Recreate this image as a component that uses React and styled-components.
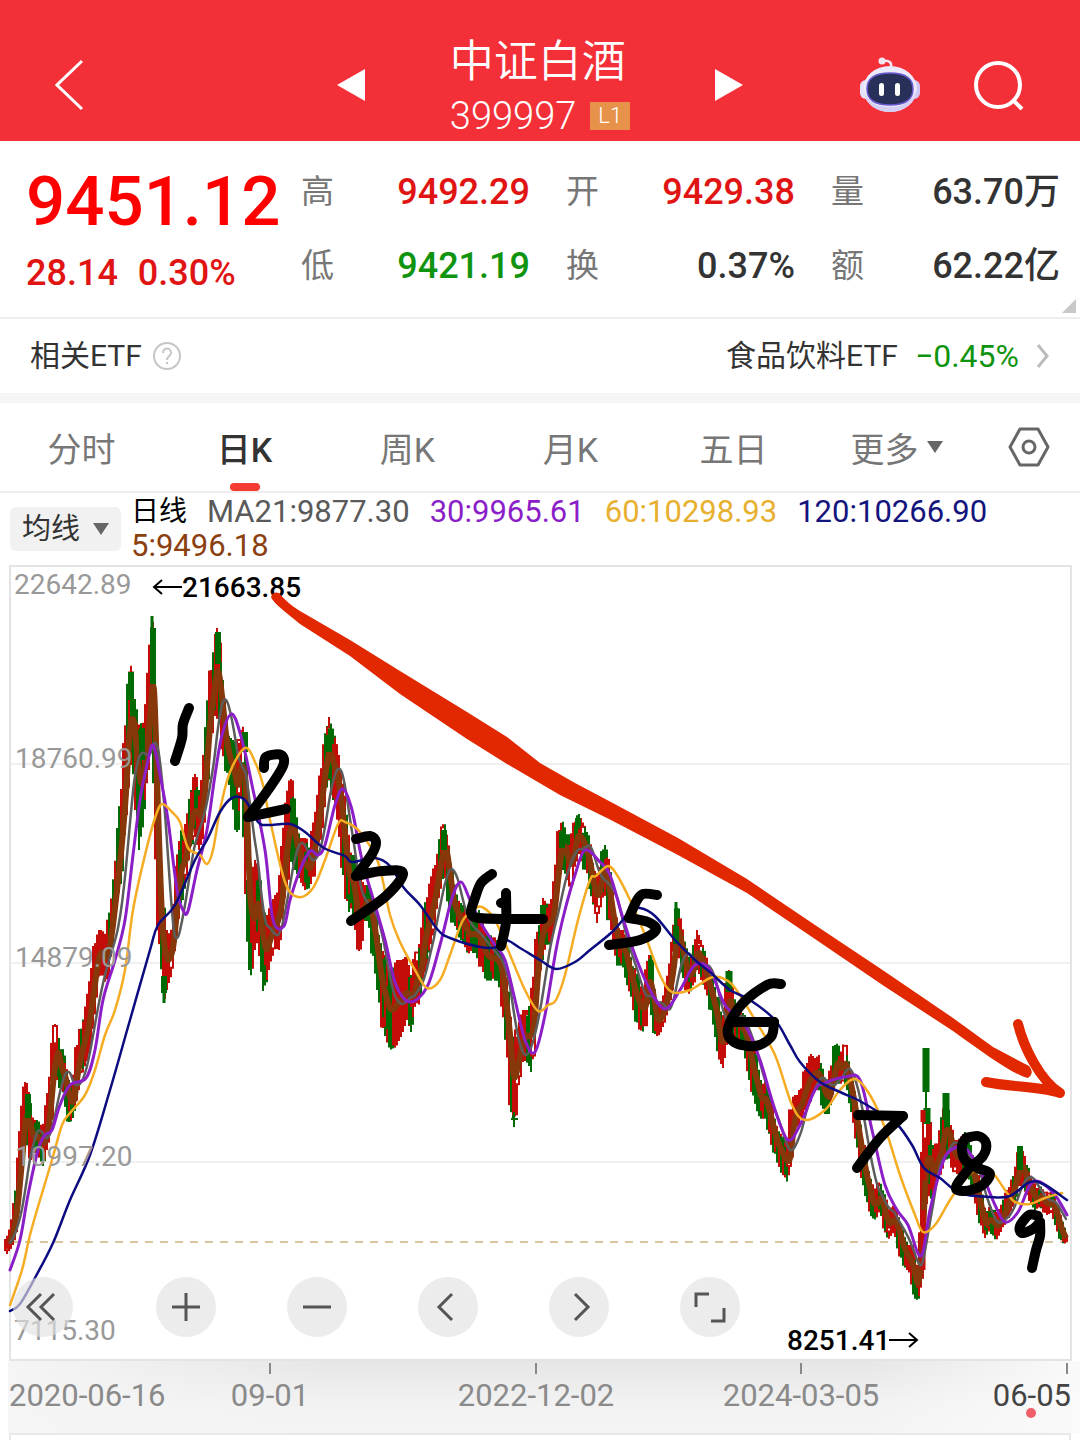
import React, { useState } from "react";
import styled, { createGlobalStyle } from "styled-components";

const stats = [
  { label: "高", value: "9492.29", color: "#e11414" },
  { label: "开", value: "9429.38", color: "#e11414" },
  { label: "量", value: "63.70万", color: "#333333" },
  { label: "低", value: "9421.19", color: "#109410" },
  { label: "换", value: "0.37%", color: "#333333" },
  { label: "额", value: "62.22亿", color: "#333333" }
];

const tabs = ["分时", "日K", "周K", "月K", "五日"];

const averages = [
  { text: "MA21:9877.30", color: "#5a5a5a" },
  { text: "30:9965.61", color: "#8c1ec8" },
  { text: "60:10298.93", color: "#e8b030" },
  { text: "120:10266.90", color: "#14147d" },
  { text: "5:9496.18", color: "#8b4010" }
];

// [x, high, low] of the price, in chart units
const price = [
  [7, 1240, 1254], [12, 1222, 1246], [17, 1180, 1222], [21, 1120, 1190], [24, 1090, 1155],
  [26, 1074, 1135], [28, 1092, 1150], [31, 1115, 1160], [35, 1120, 1152], [38, 1120, 1155],
  [43, 1128, 1166], [46, 1110, 1155], [49, 1088, 1140], [52, 1052, 1110], [55, 1024, 1070],
  [58, 1032, 1085], [61, 1050, 1090], [65, 1063, 1095], [69, 1080, 1122], [73, 1088, 1118],
  [76, 1050, 1102], [78, 1040, 1082], [82, 1026, 1070], [86, 1000, 1065], [90, 975, 1050],
  [94, 948, 1010], [98, 930, 978], [102, 930, 972], [106, 935, 985], [110, 912, 960],
  [114, 880, 930], [118, 840, 892], [121, 805, 872], [124, 760, 850], [127, 695, 800],
  [130, 661, 765], [133, 675, 765], [136, 720, 800], [139, 730, 850], [142, 727, 830],
  [146, 715, 790], [149, 650, 770], [152, 616, 740], [154, 628, 780], [156, 710, 880],
  [158, 800, 920], [160, 870, 960], [162, 895, 975], [164, 910, 1003], [167, 930, 990],
  [170, 935, 975], [173, 920, 960], [176, 880, 925], [180, 828, 905], [183, 835, 900],
  [187, 820, 870], [191, 790, 845], [195, 774, 835], [199, 800, 850], [203, 765, 830],
  [206, 730, 795], [209, 680, 755], [213, 660, 720], [217, 628, 700], [220, 650, 730],
  [224, 700, 765], [228, 735, 775], [233, 740, 800], [237, 750, 832], [241, 730, 790],
  [244, 725, 800], [246, 760, 900], [249, 850, 970], [252, 870, 978], [255, 860, 950],
  [258, 865, 940], [263, 910, 991], [267, 915, 980], [270, 905, 965], [275, 895, 948],
  [279, 890, 950], [283, 840, 910], [287, 800, 880], [291, 779, 860], [295, 815, 870],
  [300, 838, 880], [305, 838, 890], [310, 850, 888], [314, 820, 872], [318, 795, 850],
  [322, 760, 820], [325, 735, 795], [329, 717, 780], [333, 730, 800], [337, 745, 812],
  [341, 770, 845], [345, 810, 890], [349, 850, 912], [353, 855, 905], [356, 880, 942],
  [360, 880, 954], [364, 885, 920], [370, 885, 922], [374, 900, 965], [378, 930, 988],
  [381, 945, 1020], [386, 960, 1040], [390, 975, 1050], [396, 960, 1047], [402, 960, 1035],
  [407, 955, 1020], [411, 975, 1032], [415, 960, 1002], [420, 940, 1005], [424, 905, 970],
  [428, 895, 955], [432, 880, 938], [436, 860, 912], [440, 840, 885], [444, 819, 868],
  [448, 840, 895], [452, 880, 920], [458, 900, 932], [463, 905, 942], [468, 915, 955],
  [473, 920, 948], [479, 910, 960], [484, 930, 975], [489, 935, 980], [496, 940, 978],
  [500, 940, 988], [504, 970, 1018], [508, 1000, 1050], [511, 1030, 1105], [514, 1040, 1127],
  [518, 1025, 1085], [523, 1010, 1062], [527, 1010, 1060], [532, 1000, 1075], [536, 945, 1012],
  [540, 920, 962], [543, 898, 955], [548, 905, 942], [552, 900, 942], [556, 865, 910],
  [559, 830, 880], [562, 819, 870], [566, 830, 870], [570, 850, 892], [574, 825, 868],
  [578, 812, 850], [582, 820, 865], [587, 832, 872], [592, 865, 900], [597, 875, 923],
  [602, 855, 895], [605, 845, 885], [609, 870, 920], [612, 895, 935], [616, 915, 952],
  [619, 930, 965], [623, 930, 962], [627, 945, 980], [632, 965, 1000], [636, 970, 1020],
  [640, 985, 1030], [644, 990, 1032], [648, 955, 1005], [651, 955, 1002], [654, 1000, 1033],
  [658, 1005, 1037], [662, 1000, 1030], [667, 980, 1015], [671, 960, 1000], [674, 930, 975],
  [676, 902, 950], [680, 925, 958], [684, 940, 980], [688, 960, 995], [692, 955, 990],
  [697, 930, 968], [701, 940, 980], [706, 960, 992], [711, 975, 1010], [716, 990, 1035],
  [720, 1020, 1062], [723, 1030, 1068], [726, 990, 1040], [729, 970, 1020], [733, 1000, 1035],
  [740, 1010, 1042], [745, 1015, 1052], [750, 1030, 1080], [754, 1050, 1100], [758, 1065, 1115],
  [762, 1085, 1120], [766, 1080, 1115], [770, 1100, 1140], [774, 1115, 1150], [778, 1130, 1165],
  [782, 1135, 1170], [786, 1145, 1180], [788, 1150, 1183], [791, 1110, 1160], [795, 1095, 1128],
  [800, 1095, 1120], [805, 1070, 1110], [810, 1053, 1100], [815, 1058, 1090], [819, 1055, 1090],
  [824, 1075, 1110], [828, 1085, 1115], [832, 1060, 1100], [836, 1040, 1080], [840, 1055, 1085],
  [844, 1041, 1080], [848, 1060, 1092], [852, 1080, 1112], [856, 1100, 1140], [860, 1130, 1162],
  [864, 1150, 1185], [868, 1170, 1202], [872, 1190, 1218], [876, 1190, 1220], [880, 1180, 1208],
  [884, 1195, 1230], [888, 1210, 1240], [894, 1205, 1232], [898, 1215, 1245], [903, 1230, 1265],
  [907, 1245, 1270], [911, 1245, 1275], [915, 1260, 1295], [918, 1275, 1302], [921, 1220, 1285],
  [923, 1120, 1240], [928, 1110, 1195], [932, 1150, 1200], [936, 1145, 1182], [940, 1140, 1172],
  [943, 1110, 1160], [946, 1093, 1160], [950, 1120, 1158], [954, 1140, 1170], [958, 1140, 1175],
  [965, 1132, 1170], [970, 1145, 1182], [975, 1165, 1198], [980, 1190, 1222], [985, 1215, 1238],
  [990, 1205, 1230], [996, 1215, 1241], [1001, 1205, 1232], [1006, 1195, 1220], [1010, 1185, 1210],
  [1015, 1170, 1200], [1020, 1143, 1182], [1024, 1155, 1190], [1030, 1175, 1200], [1035, 1190, 1210],
  [1040, 1185, 1207], [1047, 1195, 1215], [1053, 1190, 1212], [1058, 1212, 1230], [1062, 1225, 1243],
  [1067, 1240, 1244]
];

const ma30 = [
  [10, 1270], [20, 1240], [28, 1195], [38, 1150], [45, 1135], [52, 1130], [60, 1105], [70, 1085],
  [86, 1078], [95, 1050], [103, 1000], [115, 960], [125, 920], [133, 855], [140, 800], [147, 765],
  [153, 745], [160, 775], [168, 820], [177, 890], [183, 910], [188, 911], [197, 870], [207, 830],
  [215, 775], [222, 735], [232, 714], [242, 740], [252, 785], [265, 850], [273, 920], [284, 926],
  [290, 900], [300, 870], [310, 851], [318, 855], [325, 845], [335, 805], [343, 789], [352, 810],
  [362, 860], [375, 905], [385, 940], [396, 985], [410, 1002], [427, 987], [440, 945], [452, 898],
  [461, 882], [470, 900], [482, 925], [495, 945], [505, 960], [515, 1000], [525, 1040], [535, 1052],
  [545, 1015], [556, 950], [565, 910], [575, 875], [585, 850], [600, 862], [610, 875], [622, 915],
  [635, 955], [650, 990], [665, 1009], [680, 990], [695, 965], [710, 970], [725, 1005], [745, 1025],
  [760, 1060], [775, 1110], [788, 1140], [800, 1125], [815, 1090], [825, 1083], [845, 1077],
  [860, 1080], [872, 1130], [885, 1185], [897, 1210], [908, 1225], [921, 1256], [930, 1210],
  [942, 1165], [951, 1150], [965, 1148], [980, 1170], [995, 1205], [1005, 1222], [1018, 1212],
  [1030, 1185], [1040, 1182], [1055, 1195], [1067, 1215]
];

const ma60 = [
  [10, 1305], [22, 1270], [30, 1235], [40, 1200], [52, 1160], [62, 1125], [70, 1113], [85, 1095],
  [95, 1070], [105, 1035], [115, 1010], [125, 970], [133, 910], [145, 855], [155, 818], [162, 804],
  [172, 812], [180, 822], [188, 848], [200, 855], [207, 864], [213, 850], [220, 810], [230, 772],
  [245, 748], [255, 762], [263, 785], [270, 820], [285, 882], [298, 897], [313, 888], [325, 860],
  [338, 824], [345, 822], [360, 832], [378, 862], [390, 915], [400, 942], [415, 970], [427, 988],
  [440, 980], [450, 955], [462, 922], [473, 910], [482, 907], [495, 920], [508, 950], [525, 990],
  [538, 1011], [548, 1005], [556, 1000], [565, 975], [578, 920], [590, 880], [596, 876], [608, 866],
  [617, 875], [630, 900], [645, 935], [660, 975], [672, 992], [690, 990], [710, 978], [722, 978],
  [735, 988], [755, 1020], [775, 1055], [792, 1105], [805, 1120], [825, 1110], [840, 1090],
  [855, 1079], [870, 1095], [885, 1128], [900, 1175], [915, 1215], [923, 1232], [935, 1225],
  [950, 1200], [963, 1182], [975, 1170], [990, 1170], [1005, 1190], [1015, 1202], [1030, 1204],
  [1045, 1198], [1062, 1193]
];

const ma120 = [
  [10, 1311], [20, 1304], [36, 1276], [53, 1243], [70, 1200], [90, 1155], [110, 1090], [130, 1020],
  [150, 950], [158, 925], [175, 905], [195, 860], [207, 840], [220, 812], [232, 798], [245, 800],
  [258, 822], [268, 825], [290, 824], [305, 832], [324, 848], [345, 856], [352, 862], [375, 858],
  [390, 866], [404, 888], [420, 905], [438, 930], [450, 938], [480, 947], [497, 947], [506, 940],
  [520, 948], [540, 960], [556, 969], [575, 962], [590, 950], [612, 932], [630, 912], [640, 908],
  [655, 916], [675, 940], [695, 960], [711, 973], [730, 990], [750, 1000], [775, 1020], [790, 1045],
  [800, 1062], [820, 1082], [840, 1092], [858, 1100], [880, 1113], [897, 1124], [912, 1145],
  [924, 1168], [940, 1178], [960, 1193], [990, 1197], [1010, 1196], [1030, 1182], [1045, 1185],
  [1067, 1200]
];

// handwritten wave numbers over the chart
const marks = [
  [[189, 708], [183, 724], [182, 738], [175, 761]],
  [[264, 768], [266, 757], [281, 755], [283, 766], [268, 790], [248, 817]],
  [[248, 817], [286, 809]],
  [[356, 839], [370, 836], [376, 842], [372, 854], [356, 876]],
  [[356, 876], [382, 871], [403, 873], [386, 896], [351, 921]],
  [[492, 874], [481, 883], [475, 898], [471, 913], [479, 918], [510, 919], [543, 919]],
  [[506, 893], [506, 922], [501, 946]],
  [[501, 903], [505, 902]],
  [[657, 895], [643, 894], [636, 902], [629, 918]],
  [[629, 918], [648, 922], [656, 930], [640, 940], [609, 945]],
  [[781, 984], [767, 985], [742, 1004], [728, 1028], [734, 1042], [755, 1046], [771, 1037], [774, 1022]],
  [[774, 1022], [733, 1022]],
  [[858, 1115], [903, 1116]],
  [[903, 1116], [880, 1138], [857, 1168]],
  [[966, 1138], [978, 1136], [986, 1143], [983, 1156], [968, 1170], [956, 1187], [964, 1191], [981, 1186], [990, 1174], [978, 1168], [965, 1160], [962, 1146], [966, 1138]],
  [[1038, 1216], [1029, 1215], [1020, 1226], [1022, 1233], [1033, 1229], [1040, 1222]],
  [[1040, 1222], [1040, 1236], [1036, 1250], [1032, 1268]]
];

const yLabels = [
  { text: "22642.89", x: 14, y: 594 },
  { text: "18760.99", x: 15, y: 768 },
  { text: "14879.09", x: 15, y: 967 },
  { text: "10997.20", x: 15, y: 1166 },
  { text: "7115.30", x: 14, y: 1340 }
];

const dates = [
  { text: "2020-06-16", x: 9, anchor: "start" },
  { text: "09-01", x: 270, anchor: "middle", tick: 270 },
  { text: "2022-12-02", x: 536, anchor: "middle", tick: 536 },
  { text: "2024-03-05", x: 801, anchor: "middle", tick: 801 },
  { text: "06-05", x: 1071, anchor: "end", tick: 1067, active: true }
];

const smooth = points => {
  let d = `M${points[0][0]} ${points[0][1]}`;
  for (let i = 0; i < points.length - 1; i++) {
    const p0 = points[i - 1] || points[i];
    const p1 = points[i];
    const p2 = points[i + 1];
    const p3 = points[i + 2] || p2;
    const c1 = [p1[0] + (p2[0] - p0[0]) / 6, p1[1] + (p2[1] - p0[1]) / 6];
    const c2 = [p2[0] - (p3[0] - p1[0]) / 6, p2[1] - (p3[1] - p1[1]) / 6];
    d += `C${c1.map(n => n.toFixed(1))} ${c2.map(n => n.toFixed(1))} ${p2}`;
  }
  return d;
};

const rangeAt = x => {
  let i = 0;
  while (i < price.length - 2 && price[i + 1][0] < x) i++;
  const [x0, h0, l0] = price[i];
  const [x1, h1, l1] = price[i + 1];
  const t = Math.max(0, (x - x0) / (x1 - x0));
  return { high: h0 + (h1 - h0) * t, low: l0 + (l1 - l0) * t, falling: h1 + l1 > h0 + l0 };
};

const buildCandles = () => {
  let seed = 7;
  const random = () => {
    seed = (seed * 16807) % 2147483647;
    return seed / 2147483647;
  };
  const candles = [];
  for (let x = 7; x < 1067; x += 2) {
    const { high, low, falling } = rangeAt(x);
    const size = low - high;
    const top = high + size * random() * 0.3;
    const bottom = low - size * random() * 0.3;
    const green = random() < (falling ? 0.6 : 0.15);
    const hollow = !green && random() < 0.3;
    candles.push({ x, high, low, top, bottom, green, hollow });
  }
  return candles;
};

const trailing = width => {
  const points = [];
  for (let x = 10; x <= 1067; x += 4) {
    let sum = 0;
    let count = 0;
    for (let k = Math.max(7, x - width); k <= x; k += 1) {
      const r = rangeAt(k);
      sum += (r.high + r.low) / 2;
      count++;
    }
    points.push([x, Math.round(sum / count)]);
  }
  return points;
};

const candles = buildCandles();
const ma5 = trailing(3);
const ma21 = trailing(17);

const Chart = () => (
  <ChartSvg viewBox="0 565 1080 868" role="img" aria-label="日K">
    <defs>
      <linearGradient id="axisShade" x1="0" y1="0" x2="0" y2="1">
        <stop offset="0" stopColor="#e6e6e6" />
        <stop offset="0.6" stopColor="#f2f2f2" />
        <stop offset="1" stopColor="#f4f4f4" />
      </linearGradient>
      <linearGradient id="axisFade" x1="0" y1="0" x2="1" y2="0">
        <stop offset="0" stopColor="#f5f5f5" />
        <stop offset="0.3" stopColor="#f5f5f5" stopOpacity="0" />
        <stop offset="0.8" stopColor="#fafafa" stopOpacity="0" />
        <stop offset="1" stopColor="#fafafa" />
      </linearGradient>
    </defs>
    <rect x="8" y="1361" width="1072" height="72" fill="url(#axisShade)" />
    <rect x="8" y="1361" width="1072" height="72" fill="url(#axisFade)" />
    <rect x="10" y="566" width="1061" height="794" fill="#ffffff" stroke="#e4e4e4" strokeWidth="2" />
    {[764, 963, 1162].map(y => (
      <line key={y} x1="10" x2="1070" y1={y} y2={y} stroke="#ebebeb" strokeWidth="1.5" />
    ))}
    <line x1="10" x2="1070" y1="1242" y2="1242" stroke="#d9c6a0" strokeWidth="2" strokeDasharray="8 7" />

    {candles.map(c => {
      const color = c.green ? "#006a05" : "#c40d08";
      return (
        <g key={c.x} stroke={color} strokeWidth="2" fill={c.hollow ? "#ffffff" : color}>
          <line x1={c.x} x2={c.x} y1={c.high} y2={c.low} />
          <rect x={c.x - 2} y={c.top} width="4" height={Math.max(2, c.bottom - c.top)} />
        </g>
      );
    })}
    <g fill="none" stroke="#86380a" strokeLinejoin="round">
      <path d={smooth(ma5)} strokeWidth="6" />
    </g>
    <g stroke="#006a05" fill="#006a05">
      <path strokeWidth="6" d="M131 672V700M153 628V684M142 728V760M218 632V664M28 1094V1118M164 976V993M444 830V850M676 926V944M562 832V848M578 818V826M1020 1146V1170M543 905V920M245 732V752M329 735V752" />
      <path strokeWidth="3" d="M152 616V628M164 993V1003M676 902V926" />
      <path strokeWidth="7" d="M926 1048V1092M927 1108V1124M946 1093V1120M729 971V992" />
      <path strokeWidth="2" d="M926 1092V1110M511 1119H518M514 1112V1127" />
    </g>
    <path d="M923 1110V1122M923 1165V1180M923 1210V1270" stroke="#c40d08" strokeWidth="5" />

    <g fill="none" strokeLinejoin="round" strokeLinecap="round">
      <path d={smooth(ma21)} stroke="#5c5c5c" strokeWidth="2.5" />
      <path d={smooth(ma30)} stroke="#8c1ec8" strokeWidth="3" />
      <path d={smooth(ma60)} stroke="#f5ac22" strokeWidth="2.5" />
      <path d={smooth(ma120)} stroke="#0c0c80" strokeWidth="2.5" />
    </g>

    {yLabels.map(l => (
      <AxisText key={l.text} x={l.x} y={l.y}>{l.text}</AxisText>
    ))}
    <PeakText x="182" y="597">21663.85</PeakText>
    <PeakText x="787" y="1350">8251.41</PeakText>
    <path
      d="M182 587H154M162 580L154 587L162 594M889 1340H917M909 1333L917 1340L909 1347"
      fill="none"
      stroke="#000000"
      strokeWidth="2"
    />

    <g fill="none" stroke="#000000" strokeWidth="10" strokeLinecap="round" strokeLinejoin="round">
      {marks.map((points, i) => (
        <path key={i} d={smooth(points)} />
      ))}
    </g>

    <path
      fill="#e12800"
      d="M279 593Q288 604 300 611L350 640L400 671L467 712L507 737L540 763L575 783L609 801L678 838L747 879L815 925L884 971L953 1018L993 1047L1029 1066Q1035 1073 1028 1078C1012 1074 985 1054 953 1031L884 986L815 939L747 893L678 855L609 819L560 795L507 764L467 739L400 694L350 656L300 624L284 611Q272 601 271 597Q273 591 279 593Z"
    />
    <path
      d="M1018 1024C1024 1048 1040 1080 1060 1093C1040 1086 1008 1087 986 1082"
      fill="none"
      stroke="#e12800"
      strokeWidth="10"
      strokeLinecap="round"
      strokeLinejoin="round"
    />

    {dates.map(d => (
      <React.Fragment key={d.text}>
        {d.tick && <line x1={d.tick} x2={d.tick} y1="1363" y2="1374" stroke="#888888" strokeWidth="2" />}
        <DateText x={d.x} y="1406" textAnchor={d.anchor} $active={d.active}>{d.text}</DateText>
      </React.Fragment>
    ))}
    <circle cx="1031" cy="1413" r="5" fill="#f0606a" />
  </ChartSvg>
);

const tools = [
  { name: "向前", path: "M28 17L15 30L28 43M41 17L28 30L41 43" },
  { name: "放大", path: "M30 16V44M16 30H44" },
  { name: "缩小", path: "M16 30H44" },
  { name: "左移", path: "M34 17L21 30L34 43" },
  { name: "右移", path: "M26 17L39 30L26 43" },
  { name: "全屏", path: "M16 30V17H29M44 31V44H31" }
];

const Robot = () => (
  <svg width="62" height="56" viewBox="0 0 62 56" aria-hidden="true">
    <path d="M24 4C31 3 33 6 32 11" fill="none" stroke="#f3e4f2" strokeWidth="2.5" />
    <circle cx="23" cy="4" r="3.5" fill="#f3e4f2" />
    <rect x="1" y="23" width="12" height="19" rx="6" fill="#e4e1f9" />
    <rect x="49" y="23" width="12" height="19" rx="6" fill="#cfc7f5" />
    <ellipse cx="31" cy="32" rx="27" ry="23" fill="#ece9fb" />
    <path d="M31 55C46 55 57 45 58 32C54 44 45 50 31 50C17 50 9 45 5 35C7 48 18 55 31 55Z" fill="#d5cff5" />
    <path
      d="M31 16C46 16 54 21 54 32C54 43 46 48 31 48C16 48 8 43 8 32C8 21 16 16 31 16Z"
      fill="#28305a"
      stroke="#6a5ad0"
      strokeWidth="1.5"
    />
    <rect x="20" y="26" width="5" height="13" rx="2.5" fill="#ffffff" />
    <rect x="36" y="26" width="5" height="13" rx="2.5" fill="#ffffff" />
  </svg>
);

const App = () => {
  const [active, setActive] = useState("日K");

  return (
    <Page>
      <GlobalStyle />
      <Header>
        <IconButton aria-label="返回">
          <svg width="30" height="52" viewBox="0 0 30 52" fill="none" stroke="#ffffff" strokeWidth="3">
            <path d="M27 2L2 26L27 50" />
          </svg>
        </IconButton>
        <Switcher>
          <IconButton aria-label="上一个">
            <svg width="28" height="32" viewBox="0 0 28 32" fill="#ffffff">
              <path d="M28 0V32L0 16Z" />
            </svg>
          </IconButton>
          <div>
            <Name>中证白酒</Name>
            <Code>
              399997 <Level>L1</Level>
            </Code>
          </div>
          <IconButton aria-label="下一个">
            <svg width="28" height="32" viewBox="0 0 28 32" fill="#ffffff">
              <path d="M0 0V32L28 16Z" />
            </svg>
          </IconButton>
        </Switcher>
        <Actions>
          <IconButton aria-label="助手">
            <Robot />
          </IconButton>
          <IconButton aria-label="搜索">
            <svg width="52" height="52" viewBox="0 0 52 52" fill="none" stroke="#ffffff" strokeWidth="4">
              <circle cx="25" cy="26" r="22" />
              <path d="M40 41L49 50" />
            </svg>
          </IconButton>
        </Actions>
      </Header>

      <Quote>
        <Latest>
          <Price>9451.12</Price>
          <Change>
            <span>28.14</span>
            <span>0.30%</span>
          </Change>
        </Latest>
        <Stats>
          {stats.map(s => (
            <Stat key={s.label}>
              <StatLabel>{s.label}</StatLabel>
              <StatValue $color={s.color}>{s.value}</StatValue>
            </Stat>
          ))}
        </Stats>
        <Corner />
      </Quote>

      <EtfRow>
        <EtfGroup>
          相关ETF
          <svg width="30" height="30" viewBox="0 0 30 30" fill="none" stroke="#c6c6c6" strokeWidth="2">
            <circle cx="15" cy="15" r="13" />
            <path d="M11 12C11 6 19 6 19 12C19 15 15 15 15 19M15 21V23" />
          </svg>
        </EtfGroup>
        <EtfLink href="#etf">
          食品饮料ETF
          <EtfChange>−0.45%</EtfChange>
          <svg width="14" height="26" viewBox="0 0 14 26" fill="none" stroke="#bcbcbc" strokeWidth="3">
            <path d="M2 2L11 13L2 24" />
          </svg>
        </EtfLink>
      </EtfRow>

      <Tabs>
        {tabs.map(t => (
          <Tab key={t} $active={t === active} onClick={() => setActive(t)}>
            {t}
          </Tab>
        ))}
        <Tab>
          更多
          <svg width="16" height="12" viewBox="0 0 16 12" fill="#666666">
            <path d="M0 0H16L8 12Z" />
          </svg>
        </Tab>
        <Settings aria-label="设置">
          <svg width="44" height="40" viewBox="0 0 44 40" fill="none" stroke="#666666" strokeWidth="3">
            <path d="M13 2H31L41 20L31 38H13L3 20Z" strokeLinejoin="round" />
            <circle cx="22" cy="20" r="6" />
          </svg>
        </Settings>
      </Tabs>

      <Indicators>
        <SelectBox>
          <Select aria-label="指标" defaultValue="均线">
            <option>均线</option>
          </Select>
          <svg width="16" height="12" viewBox="0 0 16 12" fill="#666666">
            <path d="M0 0H16L8 12Z" />
          </svg>
        </SelectBox>
        <Legend>
          <Period>日线</Period>
          {averages.map(a => (
            <Average key={a.text} $color={a.color}>{a.text}</Average>
          ))}
        </Legend>
      </Indicators>

      <ChartArea>
        <Chart />
        <Toolbar>
          {tools.map(t => (
            <Tool key={t.name} aria-label={t.name}>
              <svg width="60" height="60" viewBox="0 0 60 60" fill="none" stroke="#555555" strokeWidth="3">
                <path d={t.path} />
              </svg>
            </Tool>
          ))}
        </Toolbar>
      </ChartArea>
      <NextPanel />
    </Page>
  );
};

export default App;




const GlobalStyle = createGlobalStyle`
  body {
    margin: 0;
    background: #ffffff;
  }

  button, select {
    font-family: inherit;
    border: none;
    background: none;
    padding: 0;
    cursor: pointer;
  }

  svg {
    display: block;
    flex-shrink: 0;
  }
`;

const Page = styled.main`
  font-family: Roboto, "Noto Sans CJK SC", sans-serif;
  color: #333333;
  background: #ffffff;
`;

const Header = styled.header`
  display: grid;
  grid-template-columns: 1fr auto 1fr;
  align-items: center;
  justify-items: start;
  padding: 36px 55px 7px;
  background: #f33038;
  color: #ffffff;
`;

const IconButton = styled.button`
  display: flex;
`;

const Switcher = styled.div`
  display: flex;
  align-items: center;
  gap: 85px;
`;

const Name = styled.h1`
  margin: 0;
  font-size: 44px;
  font-weight: 350;
  line-height: 52px;
`;

const Code = styled.div`
  display: flex;
  align-items: center;
  gap: 14px;
  margin-top: 10px;
  font-size: 38px;
  font-weight: 300;
  line-height: 36px;
`;

const Level = styled.span`
  padding: 0 8px;
  background: #e6924a;
  font-size: 22px;
  line-height: 28px;
`;

const Actions = styled.div`
  display: flex;
  align-items: center;
  justify-self: end;
  gap: 52px;
`;

const Quote = styled.section`
  position: relative;
  display: flex;
  padding: 14px 20px 14px 26px;
  border-bottom: 2px solid #eeeeee;
`;

const Latest = styled.div`
  width: 275px;
  color: #e11414;
  font-weight: 500;
`;

const Price = styled.div`
  color: #ff0000;
  font-size: 69px;
  line-height: 94px;
`;

const Change = styled.div`
  display: flex;
  gap: 20px;
  font-size: 36px;
  line-height: 60px;
  margin-top: -6px;
`;

const Stats = styled.dl`
  flex: 1;
  display: grid;
  grid-template-columns: repeat(3, 1fr);
  column-gap: 36px;
  margin: 0;
`;

const Stat = styled.div`
  display: flex;
  justify-content: space-between;
  line-height: 74px;
`;

const StatLabel = styled.dt`
  color: #777777;
  font-size: 33px;
`;

const StatValue = styled.dd`
  margin: 0;
  color: ${props => props.$color};
  font-size: 36px;
  font-weight: 500;
`;

const Corner = styled.span`
  position: absolute;
  right: 4px;
  bottom: 4px;
  border-left: 14px solid transparent;
  border-bottom: 14px solid #c8c8c8;
`;

const EtfRow = styled.section`
  display: flex;
  justify-content: space-between;
  align-items: center;
  padding: 0 30px;
  font-size: 30px;
  line-height: 74px;
  border-bottom: 10px solid #f5f5f5;
`;

const EtfGroup = styled.div`
  display: flex;
  align-items: center;
  gap: 10px;
`;

const EtfLink = styled.a`
  display: flex;
  align-items: center;
  gap: 17px;
  color: inherit;
  text-decoration: none;
`;

const EtfChange = styled.span`
  color: #109410;
  font-size: 32px;
`;

const Tabs = styled.nav`
  display: flex;
  height: 90px;
  border-bottom: 2px solid #eeeeee;
  box-sizing: border-box;
`;

const Tab = styled.button`
  position: relative;
  flex: 1;
  display: flex;
  align-items: center;
  justify-content: center;
  gap: 8px;
  color: ${props => (props.$active ? "#333333" : "#777777")};
  font-size: 34px;
  font-weight: ${props => (props.$active ? 500 : 400)};

  &::after {
    content: "";
    display: ${props => (props.$active ? "block" : "none")};
    position: absolute;
    bottom: 0;
    width: 30px;
    height: 8px;
    border-radius: 4px;
    background: #f43c32;
  }
`;

const Settings = styled.button`
  display: flex;
  align-items: center;
  justify-content: center;
  width: 102px;
`;

const Indicators = styled.section`
  display: flex;
  align-items: center;
  gap: 10px;
  padding: 2px 10px;
`;

const SelectBox = styled.div`
  position: relative;
  display: flex;
  align-items: center;

  svg {
    position: absolute;
    right: 12px;
    pointer-events: none;
  }
`;

const Select = styled.select`
  appearance: none;
  width: 111px;
  height: 44px;
  padding-left: 12px;
  border-radius: 6px;
  background: #f1f1f1;
  color: #333333;
  font-size: 29px;
`;

const Legend = styled.div`
  flex: 1;
  display: flex;
  flex-wrap: wrap;
  align-items: center;
  column-gap: 20px;
  line-height: 34px;
`;

const Period = styled.span`
  color: #000000;
  font-size: 28px;
`;

const Average = styled.span`
  color: ${props => props.$color};
  font-size: 31px;
`;

const ChartArea = styled.section`
  position: relative;
`;

const ChartSvg = styled.svg`
  width: 100%;
  height: auto;
`;

const AxisText = styled.text`
  fill: #999999;
  font-size: 28px;
`;

const PeakText = styled.text`
  fill: #000000;
  font-size: 28px;
  font-weight: 500;
`;

const DateText = styled.text`
  fill: ${props => (props.$active ? "#444444" : "#8a8a8a")};
  font-size: 31px;
`;

const Toolbar = styled.div`
  position: absolute;
  left: 13px;
  bottom: 96px;
  display: flex;
  gap: 71px;
`;

const Tool = styled.button`
  border-radius: 50%;
  background: rgba(226, 226, 226, 0.65);

  &:first-child {
    margin-right: 12px;
  }
`;

const NextPanel = styled.section`
  height: 7px;
  margin: 0 9px;
  box-sizing: border-box;
  border: 2px solid #e8e8e8;
  border-bottom: none;
`;
